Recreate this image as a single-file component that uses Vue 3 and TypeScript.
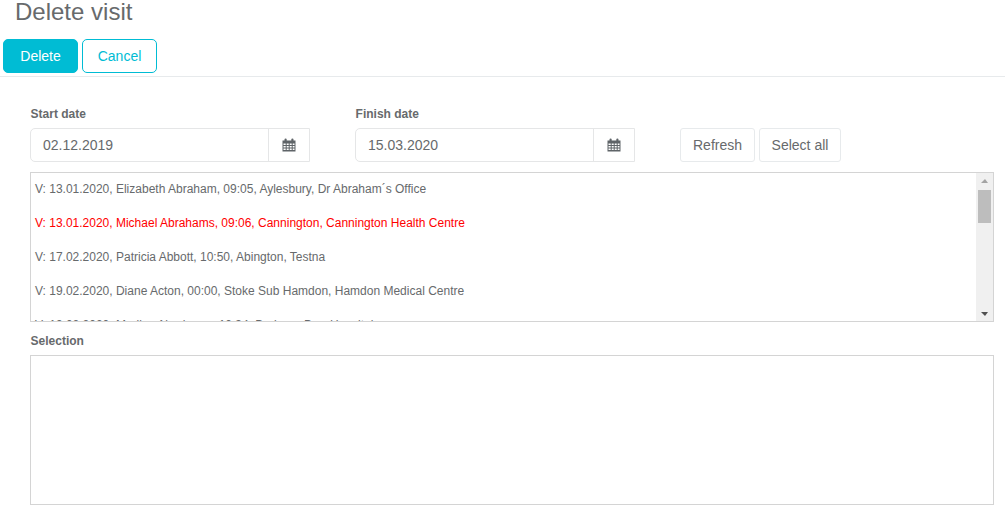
<script setup lang="ts">
const visits: { text: string; alert?: boolean }[] = [
  { text: 'V: 13.01.2020, Elizabeth Abraham, 09:05, Aylesbury, Dr Abraham´s Office' },
  { text: 'V: 13.01.2020, Michael Abrahams, 09:06, Cannington, Cannington Health Centre', alert: true },
  { text: 'V: 17.02.2020, Patricia Abbott, 10:50, Abington, Testna' },
  { text: 'V: 19.02.2020, Diane Acton, 00:00, Stoke Sub Hamdon, Hamdon Medical Centre' },
  { text: 'V: 19.02.2020, Marilyn Abrahams, 10:34, Barham, Barr Hospital' },
]
const dates = [
  { label: 'Start date', value: '02.12.2019' },
  { label: 'Finish date', value: '15.03.2020' },
]
</script>

<template>
  <div class="page">
    <h1 class="title">Delete visit</h1>
    <div class="toolbar">
      <button class="btn primary">Delete</button>
      <button class="btn outline">Cancel</button>
    </div>
    <div class="content">
      <div class="filters">
        <div v-for="d in dates" :key="d.label" class="field">
          <label class="label">{{ d.label }}</label>
          <div class="date">
            <span class="date-value">{{ d.value }}</span>
            <span class="date-addon">
              <svg width="14" height="14" viewBox="0 0 14 14">
                <path fill="#5f6468" d="M0.5 2.5h2V1.5a1 1 0 0 1 2.2 0v1h4.6v-1a1 1 0 0 1 2.2 0v1h2v11h-13z" />
                <path fill="#fff" d="M1.5 5.5h2.2v1.6H1.5zM4.7 5.5h2v1.6h-2zM7.7 5.5h2v1.6h-2zM10.7 5.5h1.8v1.6h-1.8zM1.5 8h2.2v1.6H1.5zM4.7 8h2v1.6h-2zM7.7 8h2v1.6h-2zM10.7 8h1.8v1.6h-1.8zM1.5 10.500h2.200v1.500H1.500zM4.700 10.500h2v1.500h-2zM7.700 10.500h2v1.500h-2zM10.700 10.500h1.800v1.500h-1.800z" />
              </svg>
            </span>
          </div>
        </div>
        <div class="actions">
          <button class="btn plain">Refresh</button>
          <button class="btn plain">Select all</button>
        </div>
      </div>
      <div class="list">
        <div class="rows">
          <div v-for="v in visits" :key="v.text" class="row" :class="{ alert: v.alert }">{{ v.text }}</div>
        </div>
        <div class="scrollbar">
          <span class="arrow up"></span>
          <span class="thumb"></span>
          <span class="arrow down"></span>
        </div>
      </div>
      <label class="label selection-label">Selection</label>
      <div class="selection"></div>
    </div>
  </div>
</template>

<style scoped>
.page {
  width: 1005px;
  height: 513px;
  overflow: hidden;
  background: #fff;
  color: #676a6c;
  font-family: "Liberation Sans", Arial, sans-serif;
}
.title {
  margin: 0;
  padding-left: 15px;
  height: 39px;
  font-size: 24px;
  font-weight: 400;
  line-height: 24px;
}
.toolbar {
  display: flex;
  gap: 4px;
  padding: 0 3px 3px;
  box-sizing: border-box;
  border-bottom: 1px solid #e7eaec;
  height: 38px;
}
.btn {
  box-sizing: border-box;
  height: 34px;
  font-family: inherit;
  font-size: 14px;
  border-radius: 5px;
  padding: 0;
  background: #fff;
}
.primary {
  width: 75px;
  background: #00bcd4;
  border: 1px solid #00bcd4;
  color: #fff;
}
.outline {
  width: 75px;
  border: 1px solid #00bcd4;
  color: #00bcd4;
}
.plain {
  border: 1px solid #e7eaec;
  color: #676a6c;
  border-radius: 3px;
}
.content {
  padding: 30px 11px 0 30px;
}
.filters {
  display: flex;
  align-items: flex-end;
}
.field {
  display: flex;
  flex-direction: column;
  width: 280px;
  margin-right: 45px;
}
.label {
  font-size: 12px;
  font-weight: 700;
  line-height: 14px;
  margin-bottom: 7px;
  padding-left: 0.6px;
}
.date {
  display: flex;
  height: 34px;
  box-sizing: border-box;
  border: 1px solid #e5e6e7;
  border-radius: 5px 0 0 5px;
}
.date-value {
  flex: 1;
  font-size: 14px;
  line-height: 32px;
  padding-left: 12px;
}
.date-addon {
  width: 40px;
  border-left: 1px solid #e5e6e7;
  display: flex;
  align-items: center;
  justify-content: center;
}
.actions {
  display: flex;
  gap: 4px;
}
.actions .btn:first-child {
  width: 75px;
}
.actions .btn:last-child {
  width: 82px;
}
.list {
  display: flex;
  margin-top: 10px;
  width: 964px;
  height: 150px;
  box-sizing: border-box;
  border: 1px solid #d4d4d4;
  overflow: hidden;
}
.rows {
  flex: 1;
  overflow: hidden;
  padding-left: 4px;
}
.row {
  height: 34px;
  font-size: 12px;
  line-height: 32px;
  white-space: nowrap;
}
.row.alert {
  color: #ff0000;
}
.scrollbar {
  width: 17px;
  background: #f0f0f0;
  display: flex;
  flex-direction: column;
  align-items: center;
  position: relative;
}
.thumb {
  position: absolute;
  top: 17px;
  left: 2px;
  width: 13px;
  height: 33px;
  background: #bdbdbd;
}
.arrow {
  position: absolute;
  left: 5px;
  width: 0;
  height: 0;
  border-left: 4px solid transparent;
  border-right: 3px solid transparent;
}
.arrow.up {
  top: 6px;
  border-bottom: 4px solid #a3a3a3;
}
.arrow.down {
  bottom: 5px;
  border-top: 4px solid #505050;
}
.selection-label {
  display: block;
  margin: 12px 0 7px;
}
.selection {
  width: 964px;
  height: 150px;
  box-sizing: border-box;
  border: 1px solid #d4d4d4;
}
</style>
